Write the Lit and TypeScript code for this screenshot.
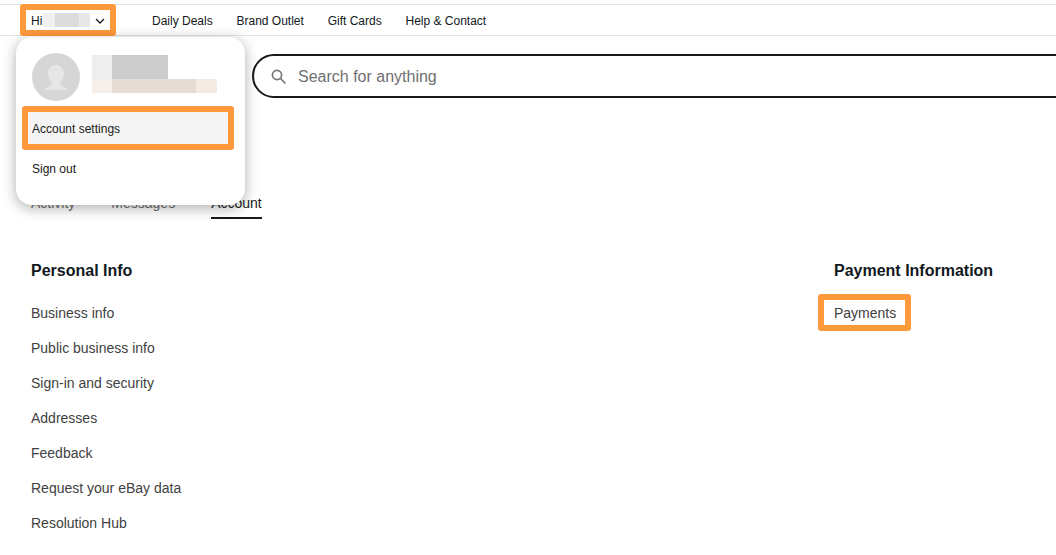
import { LitElement, html, css } from "lit";
import { customElement } from "lit/decorators.js";

@customElement("app-root")
export class AppRoot extends LitElement {
  static styles = css`
    :host { display: block; position: relative; width: 1056px; height: 555px; overflow: hidden; background: #fff; font-family: "Liberation Sans", Arial, sans-serif; color: #111820; }
    .top { margin-top: 4px; height: 30px; border-top: 1px solid #e5e5e5; border-bottom: 1px solid #e5e5e5; display: flex; align-items: center; padding-left: 20px; font-size: 12px; }
    .hi { box-sizing: border-box; width: 96px; height: 32px; margin: -1px 0; border: 6px solid #ff9a3c; border-radius: 3px; background: #fff; display: flex; align-items: center; padding: 1px 0 0 5px; }
    .hi-name { display: flex; height: 14px; margin: -2px 0 0 1px; }
    .hn1 { width: 12px; background: #f0f0f0; }
    .hn2 { width: 24px; background: #dcdcdc; }
    .hn3 { width: 11px; background: #e8e8e8; }
    .hi svg { margin-left: 5px; }
    .links { display: flex; gap: 23.8px; margin-left: 36px; padding-top: 2px; }
    .search-row { padding: 18px 0 0 252px; }
    .search { box-sizing: border-box; width: 900px; height: 44px; border: 2px solid #191919; border-radius: 22px; display: flex; align-items: center; padding-left: 17px; gap: 12px; font-size: 16px; color: #707070; }
    .search span { padding-top: 2px; }
    .tabs { display: flex; align-items: flex-start; margin: 97px 0 0 31px; font-size: 14px; color: #707070; height: 24px; }
    .tab { line-height: 16px; margin-right: 36px; }
    .tab.on { color: #191919; border-bottom: 2px solid #191919; height: 22px; margin-right: 0; }
    .cols { display: grid; grid-template-columns: 803px 1fr; padding: 42px 0 0 31px; }
    h2 { margin: 0; font-size: 16px; line-height: 20px; font-weight: 700; color: #111820; }
    .list { display: flex; flex-direction: column; margin-top: 22px; font-size: 14px; color: #414141; }
    .list span { height: 35px; line-height: 20px; }
    .pay { box-sizing: border-box; width: 93px; height: 37px; margin: 13px 0 0 -16px; border: 6px solid #ff9a3c; border-radius: 3px; padding: 1px 0 0 10px; font-size: 14px; line-height: 25px; color: #414141; }
    .menu { position: absolute; left: 16px; top: 37px; box-sizing: border-box; width: 229px; height: 168px; background: #fff; border-radius: 16px; box-shadow: 0 3px 14px rgba(0,0,0,.32); font-size: 12px; color: #191919; padding: 16px 0 0 6px; }
    .me { display: flex; gap: 12px; padding-left: 10px; }
    .avatar { width: 48px; height: 48px; display: block; }
    .blur { padding-top: 2px; display: flex; flex-direction: column; }
    .row { display: flex; }
    .row.a { height: 24px; }
    .row.b { height: 14px; }
    .a1 { width: 20px; background: #eeeeee; }
    .a2 { width: 56px; background: #cdcdcd; }
    .b1 { width: 20px; background: #f6efe9; }
    .b2 { width: 84px; background: #e5dcd6; }
    .b3 { width: 21px; background: #f3eae4; }
    .acct { box-sizing: border-box; width: 212px; height: 44px; margin-top: 5px; border: 6px solid #ff9a3c; border-radius: 3px; background: #f5f5f5; padding-left: 4px; line-height: 34px; }
    .out { margin: 9px 0 0 10px; line-height: 20px; }
  `;

  render() {
    return html`
      <div class="top">
        <div class="hi">
          <span>Hi</span>
          <span class="hi-name"><i class="hn1"></i><i class="hn2"></i><i class="hn3"></i></span>
          <svg width="10" height="6" viewBox="0 0 10 6" fill="none" stroke="#191919" stroke-width="1.3"><path d="M1 1l4 4 4-4"/></svg>
        </div>
        <div class="links"><span>Daily Deals</span><span>Brand Outlet</span><span>Gift Cards</span><span>Help &amp; Contact</span></div>
      </div>
      <div class="search-row">
        <div class="search">
          <svg width="15" height="15" viewBox="0 0 15 15" fill="none" stroke="#767676" stroke-width="1.7"><circle cx="6" cy="6" r="4.6"/><path d="M9.5 9.5l4.5 4.5" stroke-linecap="round"/></svg>
          <span>Search for anything</span>
        </div>
      </div>
      <div class="tabs">
        <span class="tab">Activity</span>
        <span class="tab">Messages</span>
        <span class="tab on">Account</span>
      </div>
      <div class="cols">
        <section>
          <h2>Personal Info</h2>
          <div class="list">
            <span>Business info</span>
            <span>Public business info</span>
            <span>Sign-in and security</span>
            <span>Addresses</span>
            <span>Feedback</span>
            <span>Request your eBay data</span>
            <span>Resolution Hub</span>
          </div>
        </section>
        <section>
          <h2>Payment Information</h2>
          <div class="pay">Payments</div>
        </section>
      </div>
      <div class="menu">
        <div class="me">
          <svg class="avatar" viewBox="0 0 48 48"><circle cx="24" cy="24" r="24" fill="#d6d6d6"/><path d="M24 12c-5 0-8 4-8 9 0 4 2 7 4 9 0 2-1 3-3 4-3 1-5 2-5 3h24c0-1-2-2-5-3-2-1-3-2-3-4 2-2 4-5 4-9 0-5-3-9-8-9z" fill="#e6e6e6"/></svg>
          <div class="blur">
            <div class="row a"><i class="a1"></i><i class="a2"></i></div>
            <div class="row b"><i class="b1"></i><i class="b2"></i><i class="b3"></i></div>
          </div>
        </div>
        <div class="acct">Account settings</div>
        <div class="out">Sign out</div>
      </div>
    `;
  }
}
